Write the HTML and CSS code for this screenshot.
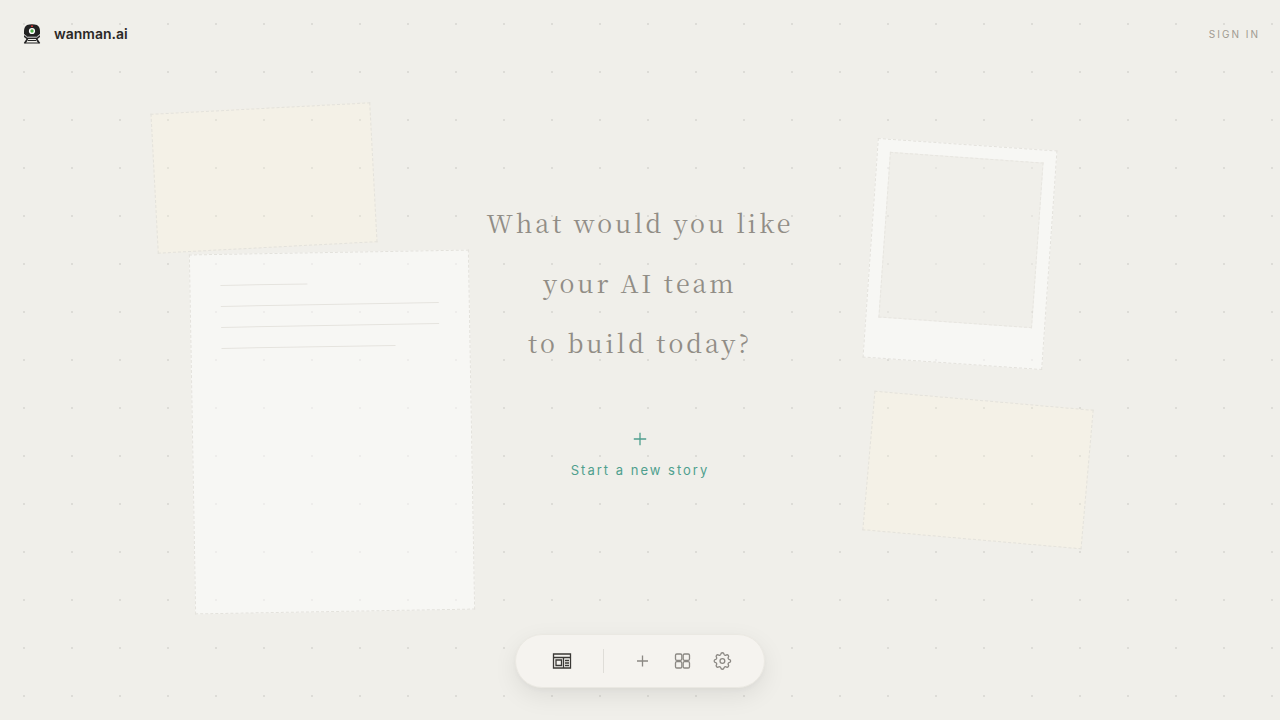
FILE: index.html
```html
<!DOCTYPE html>
<html lang="en">
<head>
    <meta charset="UTF-8">
    <meta name="viewport" content="width=device-width, initial-scale=1.0">
    <title>wanman.ai</title>
    <link rel="stylesheet" href="styles.css">
</head>
<body>
    <!-- Background cards -->
    <div class="scene" aria-hidden="true">
        <div class="card note note-top"></div>
        <div class="card paper">
            <div class="line short"></div>
            <div class="line"></div>
            <div class="line"></div>
            <div class="line medium"></div>
        </div>
        <div class="card polaroid">
            <div class="photo"></div>
        </div>
        <div class="card note note-bottom"></div>
    </div>

    <header class="header">
        <a class="brand" href="#">
            <svg class="logo" viewBox="0 0 24 24">
                <path d="M7 3Q12 1.5 17 3Q20 5 20 9V12L17 15H7L4 12V9Q4 5 7 3Z" fill="#222"/>
                <path d="M4 13L7 15.5H17L20 13V15L17.5 17H6.5L4 15Z" fill="#222"/>
                <path d="M4 12.5L7.5 15H16.5L20 12.5" fill="none" stroke="#bbb" stroke-width="0.8"/>
                <path d="M7.5 17L4.5 21.5M16.5 17L19.5 21.5" stroke="#222" stroke-width="1.8"/>
                <path d="M8 18.5H16M6 21H18" stroke="#222" stroke-width="1"/>
                <circle cx="12" cy="9" r="3.1" fill="#fff"/>
                <circle cx="12" cy="9" r="1.7" fill="#4fae45"/>
                <path d="M11 3.5H13V5H11Z" fill="#c33"/>
            </svg>
            <span>wanman.ai</span>
        </a>
        <a class="sign-in" href="#">SIGN IN</a>
    </header>

    <main class="hero">
        <h1>What would you like<br>your AI team<br>to build today?</h1>
        <button class="start" type="button">
            <svg viewBox="0 0 20 20" width="20" height="20">
                <path d="M10 3.8V16.2M3.8 10H16.2"/>
            </svg>
            <span>Start a new story</span>
        </button>
    </main>

    <nav class="dock" aria-label="Main">
        <button class="dock-btn active" type="button" aria-label="Stories">
            <svg viewBox="0 0 20 20" width="20" height="20">
                <path d="M1.5 3H18.5V17H1.5ZM1.5 6.5H18.5M4 9H9.5V14.5H4ZM11.5 7V17M13 9.5H17M13 12H17M13 14.5H17"/>
            </svg>
        </button>
        <span class="divider"></span>
        <button class="dock-btn" type="button" aria-label="New">
            <svg viewBox="0 0 20 20" width="20" height="20">
                <path d="M10.5 4.5V15.5M5 10H16"/>
            </svg>
        </button>
        <button class="dock-btn" type="button" aria-label="Apps">
            <svg viewBox="0 0 20 20" width="20" height="20">
                <rect x="3.5" y="3" width="6.3" height="6.3" rx="1.3"/>
                <rect x="11.2" y="3" width="6.3" height="6.3" rx="1.3"/>
                <rect x="3.5" y="10.7" width="6.3" height="6.3" rx="1.3"/>
                <rect x="11.2" y="10.7" width="6.3" height="6.3" rx="1.3"/>
            </svg>
        </button>
        <button class="dock-btn" type="button" aria-label="Settings">
            <svg viewBox="0 0 20 20" width="20" height="20">
                <circle cx="10.4" cy="10" r="2.4"/>
                <path transform="translate(0.4 0)" d="M8.3 3.4C8.7 1.2 11.3 1.2 11.7 3.4A1.3 1.3 0 0 0 13.5 4.2C15.3 2.9 17.1 4.7 15.8 6.5A1.3 1.3 0 0 0 16.6 8.3C18.8 8.7 18.8 11.3 16.6 11.7A1.3 1.3 0 0 0 15.8 13.5C17.1 15.3 15.3 17.1 13.5 15.8A1.3 1.3 0 0 0 11.7 16.6C11.3 18.8 8.7 18.8 8.3 16.6A1.3 1.3 0 0 0 6.5 15.8C4.7 17.1 2.9 15.3 4.2 13.5A1.3 1.3 0 0 0 3.4 11.7C1.2 11.3 1.2 8.7 3.4 8.3A1.3 1.3 0 0 0 4.2 6.5C2.9 4.7 4.7 2.9 6.5 4.2A1.3 1.3 0 0 0 8.3 3.4Z"/>
            </svg>
        </button>
    </nav>
</body>
</html>
```
FILE: styles.css
```css
* {
    margin: 0;
    padding: 0;
    box-sizing: border-box;
}

body {
    position: relative;
    min-height: 100vh;
    display: flex;
    flex-direction: column;
    background-color: #f0efea;
    background-image: radial-gradient(circle, #dddcd7 1px, transparent 1px);
    background-size: 48px 48px;
    font-family: Inter, sans-serif;
}

a {
    text-decoration: none;
    color: inherit;
}

button {
    border: none;
    background: none;
    font-family: inherit;
    cursor: pointer;
}

svg {
    display: block;
    fill: none;
    stroke: currentColor;
    stroke-width: 1.3;
}

/* Background cards */
.scene {
    position: absolute;
    inset: 0;
    overflow: hidden;
    pointer-events: none;
}

.card {
    position: absolute;
    border: 1px dashed #d8d6cf;
    opacity: 0.5;
}

.note {
    width: 220px;
    height: 140px;
    background: rgba(255, 247, 224, 0.5);
}

.note-top {
    top: 15%;
    left: 12%;
    transform: rotate(-3deg);
}

.note-bottom {
    right: 15%;
    bottom: 25%;
    transform: rotate(5deg);
}

.paper {
    top: 35%;
    left: 15%;
    width: 280px;
    height: 360px;
    padding: 30px;
    background: #fff;
    transform: rotate(-1deg);
}

.line {
    height: 1px;
    margin-bottom: 20px;
    background: #dcdad4;
}

.line.short {
    width: 40%;
}

.line.medium {
    width: 80%;
}

.polaroid {
    top: 20%;
    right: 18%;
    width: 180px;
    height: 220px;
    padding: 12px 12px 40px;
    background: #fff;
    transform: rotate(4deg);
}

.photo {
    height: 100%;
    border: 1px dashed #e0ded8;
    background: #f0efea;
}

/* Header */
.header {
    position: relative;
    display: flex;
    align-items: center;
    justify-content: space-between;
    height: 68px;
    padding: 0 20px;
}

.brand {
    display: flex;
    align-items: center;
    gap: 10px;
    color: #2a2826;
    font-size: 14px;
    font-weight: 600;
    line-height: 16px;
}

.logo {
    width: 24px;
    height: 24px;
    stroke: none;
}

.sign-in {
    color: #a09b91;
    font-size: 10px;
    letter-spacing: 2px;
}

/* Hero */
.hero {
    position: relative;
    flex: 1;
    display: flex;
    flex-direction: column;
    align-items: center;
    padding-top: 124px;
}

.hero h1 {
    color: #918d86;
    font-family: "Noto Serif CJK SC", "Noto Serif SC", "Source Serif 4", "Liberation Serif", serif;
    font-size: 25px;
    font-weight: 400;
    line-height: 60px;
    letter-spacing: 3px;
    text-align: center;
}

.start {
    display: flex;
    flex-direction: column;
    align-items: center;
    gap: 12px;
    margin-top: 57px;
    color: #4f9f8e;
    font-size: 13px;
    line-height: 18px;
    letter-spacing: 2px;
}

/* Dock */
.dock {
    position: fixed;
    bottom: 32px;
    left: 50%;
    transform: translateX(-50%);
    display: flex;
    align-items: center;
    height: 54px;
    padding: 0 22px;
    border: 1px solid #eae8e2;
    border-radius: 27px;
    background: #f5f3ef;
    box-shadow: 0 8px 24px rgba(0, 0, 0, 0.08), 0 2px 6px rgba(0, 0, 0, 0.04);
}

.dock-btn {
    display: flex;
    align-items: center;
    justify-content: center;
    width: 40px;
    height: 40px;
    color: #8b8883;
}

.dock-btn.active {
    width: 48px;
    color: #3a3835;
}

.divider {
    width: 1px;
    height: 24px;
    margin: 0 18px 0 17px;
    background: #dfddd8;
}
```
